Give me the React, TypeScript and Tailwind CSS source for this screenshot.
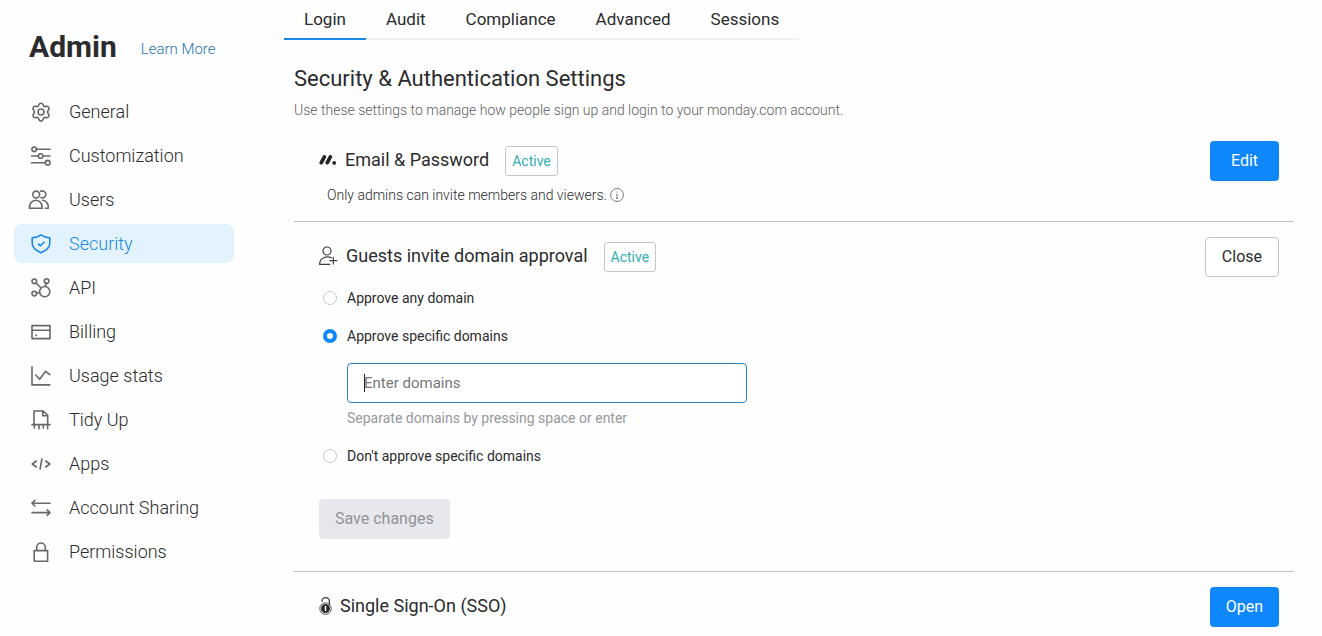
import { useState, type ReactNode } from "react";

type IconProps = { children: ReactNode };

function LineIcon({ children }: IconProps) {
  return (
    <svg
      viewBox="0 0 20 20"
      className="size-5 overflow-visible"
      fill="none"
      stroke="currentColor"
      strokeWidth="1.6"
      strokeLinecap="round"
      strokeLinejoin="round"
      aria-hidden="true"
    >
      {children}
    </svg>
  );
}

const icons = {
  general: (
    <LineIcon>
      <path d="M8 2.400C8.600.8 11.400.8 12 2.400L12.400 3.500C12.700 4.300 13.500 4.700 14.300 4.600L15.600 4.300C17.300 4 18.700 6.300 17.700 7.700L16.900 8.800C16.400 9.500 16.400 10.500 16.900 11.200L17.700 12.300C18.700 13.700 17.300 16 15.600 15.700L14.300 15.400C13.500 15.300 12.700 15.700 12.400 16.500L12 17.600C11.400 19.600 8.600 19.600 8 17.600L7.600 16.500C7.300 15.700 6.500 15.300 5.700 15.400L4.400 15.700C2.700 16 1.300 13.700 2.300 12.300L3.100 11.200C3.600 10.500 3.600 9.500 3.100 8.800L2.300 7.700C1.300 6.300 2.700 4 4.400 4.300L5.700 4.600C6.500 4.700 7.300 4.300 7.600 3.500Z" />
      <circle cx="10" cy="10" r="3" />
    </LineIcon>
  ),
  customization: (
    <LineIcon>
      <circle cx="3.2" cy="3.3" r="2.3" />
      <path d="M5.5 3.300H19M.6 10h6.700M12 10h7M.6 16.700h13.700" />
      <circle cx="9.600" cy="10" r="2.300" />
      <circle cx="16.700" cy="16.700" r="2.300" />
    </LineIcon>
  ),
  users: (
    <LineIcon>
      <circle cx="5.200" cy="4.500" r="3.400" />
      <path d="M-1.500 18.300c-.5-4.600 2.400-8 6.300-8s6.800 3.400 6.300 8zM9.700 1.300a3.500 3.500 0 1 1 .2 6.300M11.600 10.300c3.600.2 6.100 3.500 5.700 8h-3" />
    </LineIcon>
  ),
  security: (
    <LineIcon>
      <path d="M10 .9c-2.400 1.800-5.300 2.800-8.800 2.900v5.400c0 4.500 4.400 7.600 8.800 9.500 4.400-1.900 8.800-5 8.800-9.500V3.800C15.300 3.700 12.400 2.700 10 .9z" />
      <path d="M7.600 10.200l1.700 1.600L13 8.200" />
    </LineIcon>
  ),
  api: (
    <LineIcon>
      <circle cx="3.300" cy="3.300" r="2.300" />
      <circle cx="15.600" cy="3.100" r="2.300" />
      <circle cx="3.300" cy="15.600" r="2.300" />
      <circle cx="13.700" cy="13.600" r="5.100" />
      <path d="M5 5l5 5M15.200 5.400l-.7 3M5.600 15.200l3-.7" />
    </LineIcon>
  ),
  billing: (
    <LineIcon>
      <path d="M1 3.600h18v13H1zM1 8.200h18M5 13.400h.4" />
    </LineIcon>
  ),
  usage: (
    <LineIcon>
      <path d="M1 .9v18h17.800M4.700 9l3.900 4.200 6-7.900 4.200 3.400" />
    </LineIcon>
  ),
  tidy: (
    <LineIcon>
      <path d="M3 13.600V1h9.300l4.400 4.300v8.300M11.800 1.200v4.600h4.600M.9 14.600h18.200M3.400 14.800V18M8 14.800V18.800M12.300 14.800V18M16.600 14.800V18.800" />
    </LineIcon>
  ),
  apps: (
    <LineIcon>
      <path d="M5.300 7L1.200 10l4.100 3M14.700 7l4.100 3-4.100 3M10.900 5L9.100 15" />
    </LineIcon>
  ),
  sharing: (
    <LineIcon>
      <path d="M19 5.200H1M3.900 2.400L1 5.200 3.900 8M1 14.600h18M16.100 11.800l2.900 2.800-2.900 2.800" />
    </LineIcon>
  ),
  permissions: (
    <LineIcon>
      <path d="M3.200 8.600h13.400v10.600H3.200zM5.700 8.400V5.300a4.300 4.300 0 0 1 8.600 0v3.100" />
    </LineIcon>
  ),
};

const navItems = [
  { label: "General", icon: icons.general },
  { label: "Customization", icon: icons.customization },
  { label: "Users", icon: icons.users },
  { label: "Security", icon: icons.security, active: true },
  { label: "API", icon: icons.api },
  { label: "Billing", icon: icons.billing },
  { label: "Usage stats", icon: icons.usage },
  { label: "Tidy Up", icon: icons.tidy },
  { label: "Apps", icon: icons.apps },
  { label: "Account Sharing", icon: icons.sharing },
  { label: "Permissions", icon: icons.permissions },
];

function Sidebar() {
  return (
    <aside className="w-60 shrink-0 pl-3.5">
      <div className="flex items-center gap-6 pt-[25px] pl-[15px]">
        <h1 className="text-[30px] leading-[44px] font-bold">Admin</h1>
        <a href="#learn" className="pt-1 text-[15px] leading-6 font-light text-[#1f76b2]">
          Learn More
        </a>
      </div>
      <nav className="mt-[23px] flex flex-col gap-[5px]" aria-label="Admin">
        {navItems.map((item) => (
          <a
            key={item.label}
            href="#section"
            aria-current={item.active ? "page" : undefined}
            className={
              item.active
                ? "mr-1.5 flex h-[39px] items-center gap-[18px] rounded-lg bg-[#e3f3fd] pl-[17px] text-lg font-light text-[#1a87e6]"
                : "mr-1.5 flex h-[39px] items-center gap-[18px] rounded-lg pl-[17px] text-lg font-light text-[#2b2b2d]"
            }
          >
            <span className={item.active ? "text-[#1a87e6]" : "text-[#68686a]"}>{item.icon}</span>
            {item.label}
          </a>
        ))}
      </nav>
    </aside>
  );
}

const tabs = ["Login", "Audit", "Compliance", "Advanced", "Sessions"];

function Tabs() {
  return (
    <div role="tablist" className="flex w-fit">
      {tabs.map((tab, i) => (
        <button
          key={tab}
          type="button"
          role="tab"
          aria-selected={i === 0}
          className={
            i === 0
              ? "h-10 border-b-2 border-[#1a87e6] px-5 pt-0.5 text-[17px]"
              : "h-10 border-b-2 border-[#f0f0ef] px-5 pt-0.5 text-[17px]"
          }
        >
          {tab}
        </button>
      ))}
    </div>
  );
}

type SectionProps = {
  icon: ReactNode;
  title: string;
  active?: boolean;
  action: ReactNode;
  children?: ReactNode;
};

function Section({ icon, title, active, action, children }: SectionProps) {
  return (
    <section className="border-b border-[#c3c3c6] pt-[15px] pr-[15px] pl-[25px] last:border-b-0 last:pb-2">
      <header className="flex h-10 items-center justify-between">
        <div className="flex items-center">
          <div className="flex items-center pb-0.5">
            {icon}
            <h3 className="text-lg leading-7">{title}</h3>
          </div>
          {active && (
            <span className="ml-4 flex h-[30px] items-center rounded-[3px] border border-[#c5c7d0] px-1.5 text-sm text-[#33aeb0]">
              Active
            </span>
          )}
        </div>
        {action}
      </header>
      {children}
    </section>
  );
}

function PrimaryButton({ children }: { children: ReactNode }) {
  return (
    <button type="button" className="h-10 min-w-[69px] rounded-[4px] bg-[#0f87fc] px-4 text-base text-white">
      {children}
    </button>
  );
}

type RadioProps = { label: string; value: string; selected: string; onSelect: (v: string) => void };

function RadioRow({ label, value, selected, onSelect }: RadioProps) {
  return (
    <label className="flex h-5 w-fit items-center gap-2.5 pl-1 text-sm">
      <input
        type="radio"
        name="domain-policy"
        checked={selected === value}
        onChange={() => onSelect(value)}
        className="size-3.5 appearance-none rounded-full border border-[#c5c7d0] bg-white checked:border-4 checked:border-[#0f87fc]"
      />
      {label}
    </label>
  );
}

function DomainApproval() {
  const [policy, setPolicy] = useState("specific");
  const [domains, setDomains] = useState("");
  return (
    <form className="mt-[11px] flex flex-col pb-8" onSubmit={(e) => e.preventDefault()}>
      <div className="flex flex-col gap-[18px]">
        <RadioRow label="Approve any domain" value="any" selected={policy} onSelect={setPolicy} />
        <div className="flex flex-col">
          <RadioRow label="Approve specific domains" value="specific" selected={policy} onSelect={setPolicy} />
          <div className="relative mt-[17px] ml-7 max-w-[400px]">
            <input
              type="text"
              aria-label="Domains"
              placeholder="Enter domains"
              value={domains}
              onChange={(e) => setDomains(e.target.value)}
              className="block h-10 w-full rounded-[4px] border border-[#2a84c4] bg-white px-4 text-[15px] outline-none placeholder:text-[#76777b]"
            />
            {domains === "" && <span className="absolute top-[11px] left-[17px] h-[18px] w-px bg-[#222]" />}
          </div>
          <p className="mt-[5px] ml-7 text-sm leading-5 text-[#97989c]">
            Separate domains by pressing space or enter
          </p>
        </div>
        <RadioRow label="Don't approve specific domains" value="none" selected={policy} onSelect={setPolicy} />
      </div>
      <button
        type="submit"
        disabled
        className="mt-[33px] h-10 w-fit rounded-[4px] bg-[#e6e8ed] px-4 text-base text-[#929397]"
      >
        Save changes
      </button>
    </form>
  );
}

function MondayIcon() {
  return (
    <svg viewBox="0 0 18 12" className="mr-2 h-3 w-[18px]" fill="none" aria-hidden="true">
      <path d="M2.300 8.700L5.300 3M8.300 8.700L11.300 3" stroke="#222328" strokeWidth="3.700" strokeLinecap="round" />
      <circle cx="15.200" cy="8.900" r="1.900" fill="#222328" />
    </svg>
  );
}

function GuestIcon() {
  return (
    <svg
      viewBox="0 0 20 20"
      className="mr-[7px] size-5"
      fill="none"
      stroke="#3d3e43"
      strokeWidth="1.2"
      strokeLinecap="round"
      strokeLinejoin="round"
      aria-hidden="true"
    >
      <circle cx="8" cy="5" r="4" />
      <path d="M12.300 11.800C8.200 9.600.8 11 .6 18.300h10.200M14.300 11.300v6.800M10.900 14.700h6.900" />
    </svg>
  );
}

function SsoIcon() {
  return (
    <svg viewBox="0 0 14 18" className="mr-[7px] h-[18px] w-3.5" fill="none" aria-hidden="true">
      <path d="M3 4.800V4.200a3.700 3.500 0 0 1 7.400 0v4" stroke="#37383c" strokeWidth="1.3" />
      <circle cx="6.500" cy="11.600" r="5.700" stroke="#37383c" strokeWidth=".9" />
      <circle cx="6.500" cy="11.600" r="4.500" fill="#28292d" />
      <path d="M6.500 9.600v3.900" stroke="#fff" strokeWidth="1.5" strokeLinecap="round" />
    </svg>
  );
}

function InfoIcon() {
  return (
    <svg viewBox="0 0 14 14" className="size-3.5" fill="none" stroke="#68696d" aria-label="More information">
      <circle cx="7" cy="7" r="6.400" strokeWidth=".9" />
      <path d="M7 6.200v4M6.200 6.200H7M6 10.300h2" strokeWidth=".9" />
      <circle cx="6.900" cy="4" r=".6" fill="#68696d" stroke="none" />
    </svg>
  );
}

export default function App() {
  return (
    <div className="flex min-h-screen bg-[#fefefe] font-['Roboto',sans-serif] text-[#2b2b2d]">
      <Sidebar />
      <main className="min-w-0 flex-1 pr-7 pl-11">
        <Tabs />
        <div className="pl-2.5">
          <h2 className="mt-[25px] text-[22px] leading-7">Security &amp; Authentication Settings</h2>
          <p className="mt-[7px] text-sm leading-5 font-light text-[#5f6064]">
            Use these settings to manage how people sign up and login to your monday.com account.
          </p>
          <div className="mt-1.5">
            <Section
              icon={<MondayIcon />}
              title="Email & Password"
              active
              action={<PrimaryButton>Edit</PrimaryButton>}
            >
              <p className="mt-1 flex items-center gap-[3px] pb-4 pl-2 text-sm leading-5 font-light">
                Only admins can invite members and viewers.
                <InfoIcon />
              </p>
            </Section>
            <Section
              icon={<GuestIcon />}
              title="Guests invite domain approval"
              active
              action={
                <button type="button" className="h-10 rounded-[4px] border border-[#c3c4ca] bg-white px-4 text-base">
                  Close
                </button>
              }
            >
              <DomainApproval />
            </Section>
            <Section
              icon={<SsoIcon />}
              title="Single Sign-On (SSO)"
              action={<PrimaryButton>Open</PrimaryButton>}
            />
          </div>
        </div>
      </main>
    </div>
  );
}
